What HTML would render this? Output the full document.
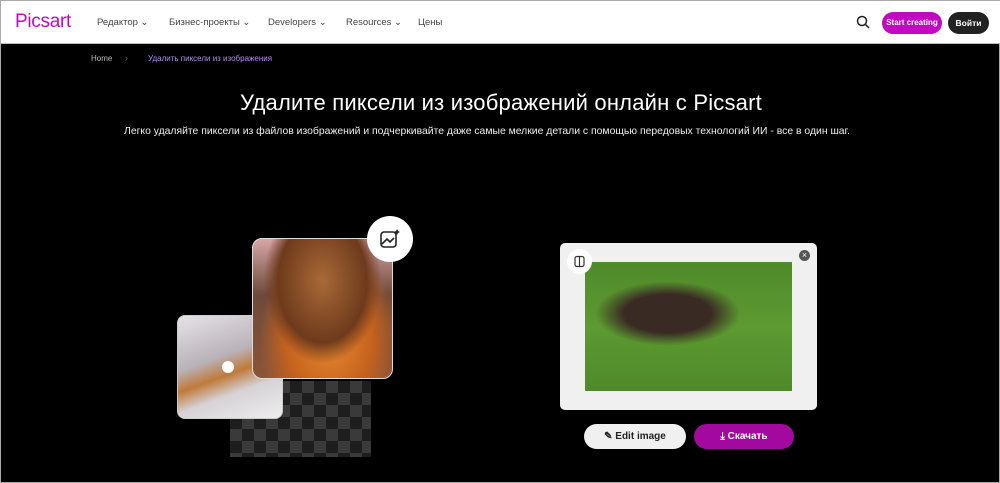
<!DOCTYPE html>
<html><head><meta charset="utf-8"><style>
*{margin:0;padding:0;box-sizing:border-box}
body{width:1000px;height:483px;background:#000;font-family:"Liberation Sans","Noto Sans CJK SC",sans-serif;position:relative;overflow:hidden;border:1px solid #aaa}
.nav{position:absolute;left:0;top:0;width:1000px;height:43px;background:#fff;border-bottom:1px solid #bbb}
.abs{position:absolute}
.nl{position:absolute;top:16px;font-size:9.5px;color:#444}
.btn{position:absolute;border-radius:14px;font-size:8.5px;font-weight:bold;color:#fff;text-align:center;white-space:nowrap}
</style></head><body>
<div class="nav">
<div class="abs" style="left:14px;top:10px;font-size:19px;color:#c209c1;letter-spacing:-0.3px">Picsart</div>
<div class="nl" style="left:96px">Редактор ⌄</div>
<div class="nl" style="left:168px">Бизнес-проекты ⌄</div>
<div class="nl" style="left:267px">Developers ⌄</div>
<div class="nl" style="left:345px">Resources ⌄</div>
<div class="nl" style="left:417px">Цены</div>
<svg class="abs" style="left:855px;top:14px" width="15" height="15" viewBox="0 0 15 15"><circle cx="6" cy="6" r="4.5" fill="none" stroke="#222" stroke-width="1.5"/><path d="M9.5 9.5L13 13" stroke="#222" stroke-width="1.5"/></svg>
<div class="btn" style="left:881px;top:11px;width:60px;height:22px;line-height:22px;background:#c209c1;font-size:8px">Start creating</div>
<div class="btn" style="left:947px;top:11px;width:41px;height:22px;line-height:22px;background:#222">Войти</div>
</div>
<div class="abs" style="left:90px;top:53px;font-size:8px;color:#bbb">Home</div>
<div class="abs" style="left:124px;top:52px;font-size:9px;color:#666">›</div>
<div class="abs" style="left:147px;top:53px;font-size:8px;color:#b58cf0">Удалить пиксели из изображения</div>
<div class="abs" style="left:0;width:1000px;top:89px;text-align:center;color:#fff;font-size:22px;letter-spacing:0.2px">Удалите пиксели из изображений онлайн с Picsart</div>
<div class="abs" style="left:0;width:972px;top:125px;text-align:center;color:#eee;font-size:10.4px">Легко удаляйте пиксели из файлов изображений и подчеркивайте даже самые мелкие детали с помощью передовых технологий ИИ - все в один шаг.</div>
<div class="abs" style="left:229px;top:380px;width:141px;height:76px;background-color:#3a3a3a;background-image:linear-gradient(45deg,#1e1e1e 25%,transparent 25%,transparent 75%,#1e1e1e 75%),linear-gradient(45deg,#1e1e1e 25%,transparent 25%,transparent 75%,#1e1e1e 75%);background-size:24px 24px;background-position:0 0,12px 12px"></div>
<div class="abs" style="left:176px;top:314px;width:106px;height:104px;border-radius:8px;border:1px solid #ccc;background:linear-gradient(160deg,#e6e3e8,#b9b2b9 40%,#c07a3a 55%,#d6d2d6 70%,#eee)"></div>
<div class="abs" style="left:221px;top:360px;width:12px;height:12px;border-radius:50%;background:#fff"></div>
<div class="abs" style="left:251px;top:237px;width:141px;height:141px;border-radius:10px;border:1px solid #ddd;background:radial-gradient(ellipse at 50% 30%,#a86a36,#6e3a1c 45%,transparent 60%),radial-gradient(ellipse at 55% 72%,#e8892f,#c5621e 40%,transparent 65%),linear-gradient(180deg,#d7a6a8,#6e4a3a 40%,#8a5538)"></div>
<div class="abs" style="left:366px;top:215px;width:46px;height:46px;border-radius:50%;background:#fff"></div>
<svg class="abs" style="left:378px;top:227px" width="22" height="22" viewBox="0 0 22 22"><rect x="2" y="4" width="15" height="15" rx="3" fill="none" stroke="#222" stroke-width="1.6"/><path d="M3 16l5-5 3 3 4-4" fill="none" stroke="#222" stroke-width="1.6"/><path d="M18 1l1 2 2 1-2 1-1 2-1-2-2-1 2-1z" fill="#222"/></svg>
<div class="abs" style="left:559px;top:242px;width:257px;height:167px;border-radius:5px;background:#f0f0f0"></div>
<div class="abs" style="left:584px;top:261px;width:207px;height:129px;background:radial-gradient(ellipse 35% 25% at 40% 40%,#3a2a24,#3a2a24 60%,transparent 100%),linear-gradient(180deg,#4f8a2a,#5d9a31 50%,#4f8a2a)"></div>
<div class="abs" style="left:566px;top:248px;width:25px;height:25px;border-radius:50%;background:#fff"></div>
<svg class="abs" style="left:572px;top:254px" width="13" height="13" viewBox="0 0 13 13"><rect x="2" y="1.5" width="9" height="10" rx="2" fill="none" stroke="#333" stroke-width="1.2"/><path d="M6.5 1v11" stroke="#333" stroke-width="1.2"/></svg>
<div class="abs" style="left:798px;top:249px;width:11px;height:11px;border-radius:50%;background:#555;color:#fff;font-size:9px;line-height:11px;text-align:center">×</div>
<div class="btn" style="left:583px;top:423px;width:102px;height:25px;line-height:25px;background:#f0f0f0;color:#222;font-size:10px">✎ Edit image</div>
<div class="btn" style="left:693px;top:423px;width:100px;height:25px;line-height:25px;background:#a3089f;font-size:10px">⤓ Скачать</div>
</body></html>
